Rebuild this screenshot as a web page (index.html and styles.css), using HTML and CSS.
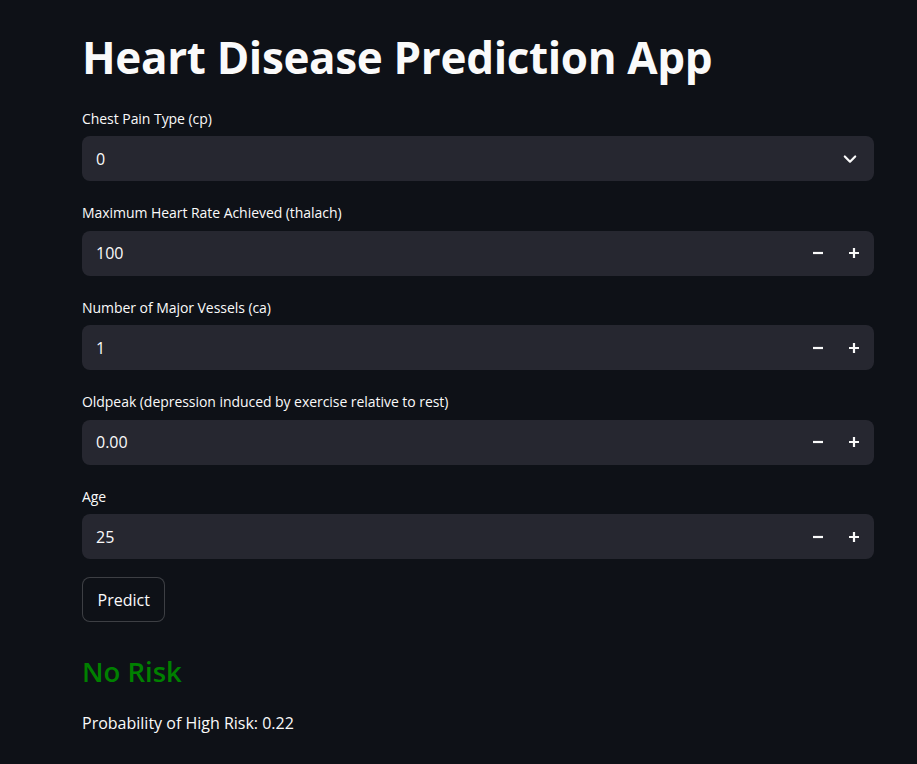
FILE: index.html
```html
<!DOCTYPE html>
<html>
<head>
<meta charset="utf-8">
<link rel="stylesheet" href="styles.css">
</head>
<body>
<main class="main">
  <h1 class="title">Heart Disease Prediction App</h1>
  <div class="widget">
    <label class="label">Chest Pain Type (cp)</label>
    <div class="field">
      <span class="value">0</span>
      <svg class="chev" width="14" height="14" viewBox="0 0 14 14"><path d="M1.8 4.5 L7 9.7 L12.2 4.5" fill="none" stroke="#fafafa" stroke-width="2.2" stroke-linecap="round" stroke-linejoin="round"/></svg>
    </div>
  </div>
  <div class="widget">
    <label class="label">Maximum Heart Rate Achieved (thalach)</label>
    <div class="field">
      <span class="value">100</span>
      <div class="steps">
        <svg width="36" height="14" viewBox="0 0 36 14"><path d="M13 7 H23" stroke="#fafafa" stroke-width="2.2"/></svg>
        <svg width="36" height="14" viewBox="0 0 36 14"><path d="M13 7 H23 M18 2 V12" stroke="#fafafa" stroke-width="2.2"/></svg>
      </div>
    </div>
  </div>
  <div class="widget">
    <label class="label">Number of Major Vessels (ca)</label>
    <div class="field">
      <span class="value">1</span>
      <div class="steps">
        <svg width="36" height="14" viewBox="0 0 36 14"><path d="M13 7 H23" stroke="#fafafa" stroke-width="2.2"/></svg>
        <svg width="36" height="14" viewBox="0 0 36 14"><path d="M13 7 H23 M18 2 V12" stroke="#fafafa" stroke-width="2.2"/></svg>
      </div>
    </div>
  </div>
  <div class="widget">
    <label class="label">Oldpeak (depression induced by exercise relative to rest)</label>
    <div class="field">
      <span class="value">0.00</span>
      <div class="steps">
        <svg width="36" height="14" viewBox="0 0 36 14"><path d="M13 7 H23" stroke="#fafafa" stroke-width="2.2"/></svg>
        <svg width="36" height="14" viewBox="0 0 36 14"><path d="M13 7 H23 M18 2 V12" stroke="#fafafa" stroke-width="2.2"/></svg>
      </div>
    </div>
  </div>
  <div class="widget">
    <label class="label">Age</label>
    <div class="field">
      <span class="value">25</span>
      <div class="steps">
        <svg width="36" height="14" viewBox="0 0 36 14"><path d="M13 7 H23" stroke="#fafafa" stroke-width="2.2"/></svg>
        <svg width="36" height="14" viewBox="0 0 36 14"><path d="M13 7 H23 M18 2 V12" stroke="#fafafa" stroke-width="2.2"/></svg>
      </div>
    </div>
  </div>
  <div class="btn-row"><button class="btn">Predict</button></div>
  <h3 class="result">No Risk</h3>
  <p class="prob">Probability of High Risk: 0.22</p>
</main>
</body>
</html>
```
FILE: styles.css
```css
html, body {
  margin: 0;
  padding: 0;
  background: #0e1117;
  color: #fafafa;
  font-family: "Open Sans", "Noto Sans", sans-serif;
}
.main {
  width: 792px;
  margin-left: 82px;
  padding-top: 30px;
  display: flex;
  flex-direction: column;
}
.title {
  margin: 0;
  font-size: 44px;
  font-weight: 700;
  line-height: 54px;
  height: 54px;
  letter-spacing: -0.35px;
}
.widget {
  display: flex;
  flex-direction: column;
  margin-top: 22.5px;
}
.widget + .widget {
  margin-top: 20px;
}
.label {
  font-size: 14px;
  letter-spacing: -0.05px;
  line-height: 21px;
  height: 21px;
  padding-top: 1px;
  margin-bottom: 7.5px;
}
.field {
  height: 45px;
  background: #262730;
  border-radius: 8px;
  display: flex;
  align-items: center;
  justify-content: space-between;
  padding-left: 14px;
  padding-right: 17px;
}
.value {
  font-size: 16px;
}
.chev {
  display: block;
}
.steps {
  display: flex;
  margin-right: -15px;
}
.steps svg {
  display: block;
}
.btn-row {
  margin-top: 18px;
}
.btn {
  height: 45px;
  padding: 0 14.5px;
  background: #0e1117;
  color: #fafafa;
  border: 1px solid rgba(250,250,250,0.2);
  border-radius: 8px;
  font-family: "Open Sans", "Noto Sans", sans-serif;
  font-size: 16px;
}
.result {
  margin: 30px 0 0 0;
  font-size: 27.5px;
  line-height: 40px;
  font-weight: 600;
  color: #008000;
}
.prob {
  margin: 19px 0 0 0;
  font-size: 16px;
  line-height: 24px;
}
```
